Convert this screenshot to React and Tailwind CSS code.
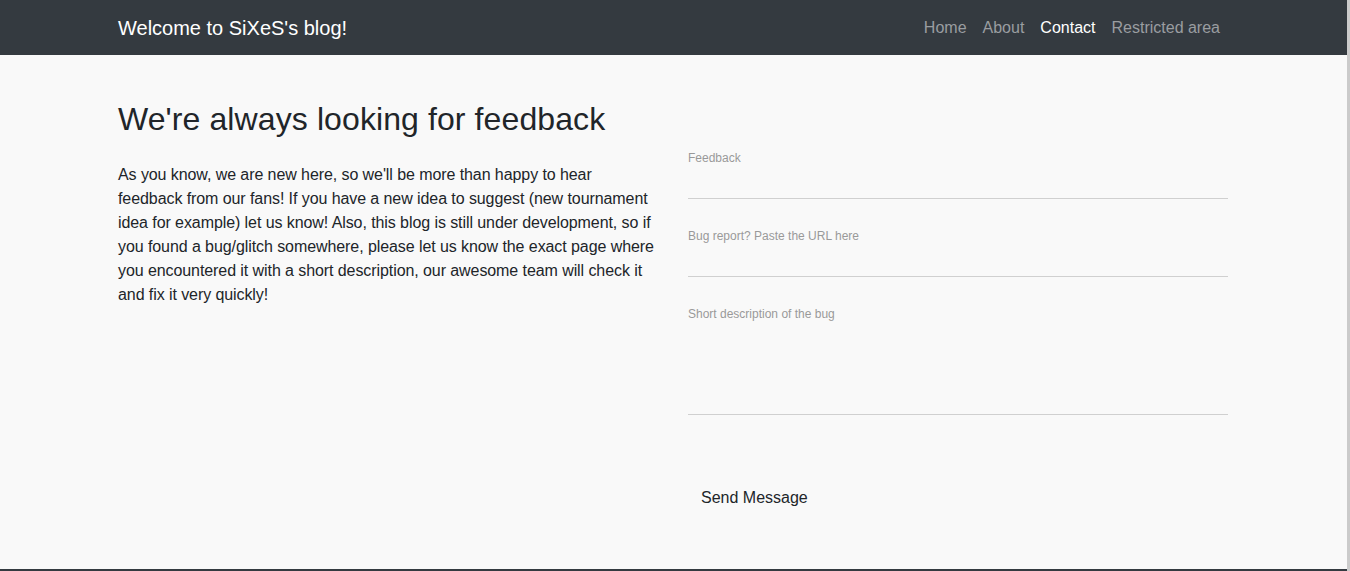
import React from 'react';

const links = [
    { label: 'Home', active: false },
    { label: 'About', active: false },
    { label: 'Contact', active: true },
    { label: 'Restricted area', active: false },
];

const Field = ({ label, tall }) => (
    <div className="mb-[30px]">
        <label className="block text-[12px] leading-[14px] text-[#999]">{label}</label>
        {tall ? (
            <textarea className="block w-full h-[94px] resize-none bg-transparent border-b border-[#d0d0d0] outline-none" />
        ) : (
            <input className="block w-full h-[34px] bg-transparent border-b border-[#d0d0d0] outline-none" />
        )}
    </div>
);

const App = () => {
    return (
        <div className="min-h-screen bg-[#f9f9f9] border-r-[3px] border-[#cbcbcb] font-['Liberation_Sans',Arial,sans-serif] text-[#212529]">
            {/* navbar */}
            <nav className="h-[55px] bg-[#343a40]">
                <div className="w-[1110px] ml-[118px] h-full flex items-center justify-between">
                    <span className="text-[20px] text-white">Welcome to SiXeS's blog!</span>
                    <ul className="flex items-center">
                        {links.map((l) => (
                            <li key={l.label}>
                                <a className={`block px-2 text-[16px] leading-6 ${l.active ? 'text-white' : 'text-[#9a9da0]'}`}>{l.label}</a>
                            </li>
                        ))}
                    </ul>
                </div>
            </nav>

            <main className="h-[514px]">
                <div className="w-[1110px] ml-[118px] flex pt-[45px]">
                    <div className="w-[540px] mr-[30px]">
                        <h2 className="text-[32px] leading-[38px] tracking-[0.1px]">We're always looking for feedback</h2>
                        <p className="mt-[25px] text-[16px] leading-6 tracking-[-0.08px]">
                            As you know, we are new here, so we'll be more than happy to hear feedback from our fans! If you have a new idea to suggest (new tournament idea for example) let us know! Also, this blog is still under development, so if you found a bug/glitch somewhere, please let us know the exact page where you encountered it with a short description, our awesome team will check it and fix it very quickly!
                        </p>
                    </div>
                    <form className="w-[540px] pt-[51px]">
                        <Field label="Feedback" />
                        <Field label="Bug report? Paste the URL here" />
                        <Field label="Short description of the bug" tall />
                        <button type="button" className="mt-[35px] px-[13px] py-[6px] text-[16px] leading-6 text-[#212529]">
                            Send Message
                        </button>
                    </form>
                </div>
            </main>

            <footer className="h-[60px] bg-[#343a40]" />
        </div>
    );
};

export default App;
